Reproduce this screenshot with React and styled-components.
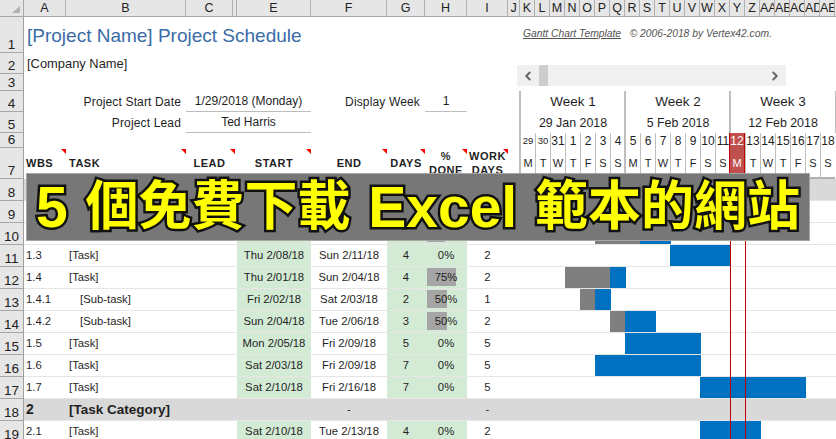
import React from 'react'
import styled, { createGlobalStyle } from 'styled-components'
import { ChevronLeft, ChevronRight } from 'lucide-react'

const letters = ['A', 'B', 'C', '', 'E', 'F', 'G', 'H', 'I', 'J', 'K', 'L', 'M', 'N', 'O', 'P', 'Q', 'R', 'S', 'T', 'U', 'V', 'W', 'X', 'Y', 'Z', 'AA', 'AB', 'AC', 'AD', 'AE']
const dayNums = [29, 30, 31, 1, 2, 3, 4, 5, 6, 7, 8, 9, 10, 11, 12, 13, 14, 15, 16, 17, 18]
const dayNames = ['M', 'T', 'W', 'T', 'F', 'S', 'S']
const weeks = [['Week 1', '29 Jan 2018'], ['Week 2', '5 Feb 2018'], ['Week 3', '12 Feb 2018']]
const TODAY = 14

const tasks = [
  { cat: true, wbs: '1', task: '[Task Category]' },
  { wbs: '1.1', task: '[Task]', start: 'Mon 1/29/18', end: 'Sat 2/03/18', days: 6, pct: 100, work: 5, gray: [0, 6] },
  { wbs: '1.2', task: '[Task]', start: 'Sat 2/03/18', end: 'Wed 2/07/18', days: 5, pct: 45, work: 3, gray: [5, 3], blue: [8, 2] },
  { wbs: '1.3', task: '[Task]', start: 'Thu 2/08/18', end: 'Sun 2/11/18', days: 4, pct: 0, work: 2, blue: [10, 4] },
  { wbs: '1.4', task: '[Task]', start: 'Thu 2/01/18', end: 'Sun 2/04/18', days: 4, pct: 75, work: 2, gray: [3, 3], blue: [6, 1] },
  { wbs: '1.4.1', task: '[Sub-task]', sub: true, start: 'Fri 2/02/18', end: 'Sat 2/03/18', days: 2, pct: 50, work: 1, gray: [4, 1], blue: [5, 1] },
  { wbs: '1.4.2', task: '[Sub-task]', sub: true, start: 'Sun 2/04/18', end: 'Tue 2/06/18', days: 3, pct: 50, work: 2, gray: [6, 1], blue: [7, 2] },
  { wbs: '1.5', task: '[Task]', start: 'Mon 2/05/18', end: 'Fri 2/09/18', days: 5, pct: 0, work: 5, blue: [7, 5] },
  { wbs: '1.6', task: '[Task]', start: 'Sat 2/03/18', end: 'Fri 2/09/18', days: 7, pct: 0, work: 5, blue: [5, 7] },
  { wbs: '1.7', task: '[Task]', start: 'Sat 2/10/18', end: 'Fri 2/16/18', days: 7, pct: 0, work: 5, blue: [12, 7] },
  { cat: true, wbs: '2', task: '[Task Category]' },
  { wbs: '2.1', task: '[Task]', start: 'Sat 2/10/18', end: 'Tue 2/13/18', days: 4, pct: 0, work: 2, blue: [12, 4] },
]

function App() {
  return (
    <Page>
      <GlobalStyle />
      <HeaderRow>
        <Corner />
        <ColumnLetters>
          {letters.map((l, i) => <Letter key={i}>{l}</Letter>)}
        </ColumnLetters>
      </HeaderRow>

      <Row>
        <RowNum $h={36}>1</RowNum>
        <Cells>
          <Title>[Project Name] Project Schedule</Title>
          <Credit><u>Gantt Chart Template</u>&nbsp;&nbsp; © 2006-2018 by Vertex42.com.</Credit>
        </Cells>
      </Row>
      <Row>
        <RowNum $h={21}>2</RowNum>
        <Cells><Company>[Company Name]</Company></Cells>
      </Row>
      <Row>
        <RowNum $h={17}>3</RowNum>
        <Cells />
      </Row>
      <Row>
        <RowNum $h={21}>4</RowNum>
        <Cells>
          <Label $col={1} $span={2}>Project Start Date</Label>
          <Value $col={3} $span={3}>1/29/2018 (Monday)</Value>
          <Label $col={6} $span={2}>Display Week</Label>
          <Value $col={8} $span={1}>1</Value>
          {weeks.map((w, i) => <WeekCell key={i} $i={i}>{w[0]}</WeekCell>)}
          <WeekEdge />
        </Cells>
      </Row>
      <Row>
        <RowNum $h={21}>5</RowNum>
        <Cells>
          <Label $col={1} $span={2}>Project Lead</Label>
          <Value $col={3} $span={3}>Ted Harris</Value>
          {weeks.map((w, i) => <DateCell key={i} $i={i}>{w[1]}</DateCell>)}
          <WeekEdge />
        </Cells>
      </Row>
      <Row>
        <RowNum $h={15}>6</RowNum>
        <Cells>
          {dayNums.map((d, i) => (
            <DayNum key={i} $i={i} $small={i < 2} $today={i === TODAY}>{d}</DayNum>
          ))}
        </Cells>
      </Row>
      <Row>
        <RowNum $h={31}>7</RowNum>
        <Cells>
          <Heading $col={1} $align="flex-start" $pad={2}>WBS</Heading>
          <Heading $col={2} $align="flex-start" $pad={3}>TASK</Heading>
          <Heading $col={3} $nudge={-2}>LEAD</Heading>
          <Heading $col={5}>START</Heading>
          <Heading $col={6}>END</Heading>
          <Heading $col={7}>DAYS</Heading>
          <Heading $col={8}>%<br />DONE</Heading>
          <Heading $col={9}>WORK<br />DAYS</Heading>
          {dayNums.map((d, i) => (
            <DayName key={i} $i={i} $today={i === TODAY}>{dayNames[i % 7]}</DayName>
          ))}
        </Cells>
      </Row>

      {tasks.map((t, n) => (
        <Row key={n}>
          <RowNum $h={22}>{n + 8}</RowNum>
          <TaskCells $cat={t.cat}>
            <Wbs $cat={t.cat}>{t.wbs}</Wbs>
            <TaskName $cat={t.cat} $sub={t.sub}>{t.task}</TaskName>
            {t.cat ? (
              <>
                <Plain $col={6}>-</Plain>
                <Plain $col={9}>-</Plain>
              </>
            ) : (
              <>
                <Tinted $col={5}>{t.start}</Tinted>
                <Plain $col={6}>{t.end}</Plain>
                <Tinted $col={7}>{t.days}</Tinted>
                <Percent $pct={t.pct}>{t.pct}%</Percent>
                <Plain $col={9}>{t.work}</Plain>
              </>
            )}
            {t.gray && <Bar $from={t.gray[0]} $len={t.gray[1]} $color="#7f7f7f" />}
            {t.blue && <Bar $from={t.blue[0]} $len={t.blue[1]} $color="#0070c0" />}
            <TodayLine />
          </TaskCells>
        </Row>
      ))}

      <Scroller>
        <ScrollBtn><ChevronLeft size={14} strokeWidth={3.4} color="#666" /></ScrollBtn>
        <ScrollThumb />
        <ScrollBtn><ChevronRight size={14} strokeWidth={3.4} color="#666" /></ScrollBtn>
      </Scroller>

      <Banner>
        <Latin>5</Latin> 個免費下載 <Latin>Excel</Latin> 範本的網站
      </Banner>
    </Page>
  )
}

export default App

const GlobalStyle = createGlobalStyle`
  html, body {
    margin: 0;
    background: #fff;
  }
`

const Page = styled.div`
  position: relative;
  width: 836px;
  height: 439px;
  overflow: hidden;
  background: #fff;
  color: #1f1f1f;
  font-family: "Liberation Sans", Arial, sans-serif;
  font-size: 12px;
`

const HeaderRow = styled.div`
  display: flex;
  height: 17px;
`

const Corner = styled.div`
  position: relative;
  box-sizing: border-box;
  width: 24px;
  flex: none;
  background: #e6e6e6;
  border-right: 1px solid #a8a8a8;
  border-bottom: 1px solid #a8a8a8;
  &::after {
    content: '';
    position: absolute;
    left: 12px;
    top: 6px;
    width: 8px;
    height: 7px;
    background: #b4b4b4;
    clip-path: polygon(100% 0, 100% 100%, 0 100%);
  }
`

const grid = `
  display: grid;
  flex: 1;
  grid-template-columns: 42px 120px 47px 4px 74px 76px 38px 42px 41px 12px repeat(21, 15px) 1px;
  grid-template-rows: 1fr;
  min-width: 0;
`

const ColumnLetters = styled.div`
  ${grid}
  background: #e6e6e6;
  box-sizing: border-box;
  border-bottom: 1px solid #a8a8a8;
`

const Letter = styled.div`
  border-right: 1px solid #b0b0b0;
  font-size: 12.5px;
  line-height: 16px;
  text-align: center;
  white-space: nowrap;
  overflow: hidden;
  color: #222;
`

const Row = styled.div`
  display: flex;
`

const RowNum = styled.div`
  box-sizing: border-box;
  width: 24px;
  height: ${p => p.$h}px;
  flex: none;
  display: flex;
  align-items: flex-end;
  justify-content: center;
  background: #e6e6e6;
  border-right: 1px solid #a0a0a0;
  border-bottom: 1px solid #a8a8a8;
  font-size: 13.5px;
  line-height: 15px;
  color: #222;
`

const Cells = styled.div`
  ${grid}
`

const TaskCells = styled.div`
  ${grid}
  box-sizing: border-box;
  border-bottom: 1px solid #e6e6e6;
  background: ${p => (p.$cat ? '#d9d9d9' : '#fff')};
`

const Cell = styled.div`
  grid-row: 1;
  grid-column: ${p => p.$col} / span ${p => p.$span || 1};
  display: flex;
  align-items: center;
  justify-content: center;
  white-space: nowrap;
  min-width: 0;
`

const Title = styled(Cell).attrs({ $col: 1, $span: 9 })`
  justify-content: flex-start;
  padding: 2px 0 0 3px;
  color: #3a6ca6;
  font-size: 19px;
`

const Credit = styled(Cell).attrs({ $col: 11, $span: 21 })`
  justify-content: flex-start;
  padding: 0 0 3px 3px;
  color: #555;
  font-size: 10.3px;
  font-style: italic;
`

const Company = styled(Cell).attrs({ $col: 1, $span: 9 })`
  justify-content: flex-start;
  padding-left: 3px;
  font-size: 12.9px;
`

const Label = styled(Cell)`
  justify-content: flex-end;
  padding-right: 5px;
  letter-spacing: 0.15px;
`

const Value = styled(Cell)`
  border-bottom: 1px solid #bdbdbd;
`

const WeekCell = styled(Cell).attrs(p => ({ $col: 11 + p.$i * 7, $span: 7 }))`
  border-left: 2px solid #bfbfbf;
  margin-left: -1px;
  font-size: 13.5px;
`

const DateCell = styled(WeekCell)`
  font-size: 12.4px;
`

const WeekEdge = styled(Cell).attrs({ $col: 32 })`
  background: #bfbfbf;
`

const DayNum = styled(Cell).attrs(p => ({ $col: 11 + p.$i }))`
  border-left: ${p => (p.$i % 7 === 0 ? '2px' : '1px')} solid #bfbfbf;
  margin-left: ${p => (p.$i % 7 === 0 ? '-1px' : '0')};
  font-size: ${p => (p.$small ? '9.5px' : '12px')};
  ${p => p.$today && `
    background: #c0504d;
    color: #fff;
    border-left: 1px solid #c00000;
    border-right: 1px solid #c00000;
  `}
`

const DayName = styled(DayNum)`
  font-size: 11px;
  align-items: flex-start;
  padding-top: 9px;
  box-sizing: border-box;
  border-bottom: 2px solid #b0b0b0;
`

const Heading = styled(Cell)`
  position: relative;
  justify-content: ${p => p.$align || 'center'};
  text-align: center;
  padding-left: ${p => p.$pad || 0}px;
  padding-bottom: 2px;
  font-size: 11px;
  font-weight: bold;
  letter-spacing: 0.5px;
  line-height: 14px;
  &::after {
    content: '';
    position: absolute;
    top: 1px;
    right: ${p => p.$nudge || 0}px;
    width: 5px;
    height: 5px;
    background: #f00;
    clip-path: polygon(0 0, 100% 0, 100% 100%);
  }
`

const Wbs = styled(Cell).attrs({ $col: 1 })`
  justify-content: flex-start;
  padding: 0 0 1px 2px;
  font-size: ${p => (p.$cat ? '14px' : '11.3px')};
  font-weight: ${p => (p.$cat ? 'bold' : 'normal')};
`

const TaskName = styled(Cell).attrs({ $col: 2, $span: 2 })`
  justify-content: flex-start;
  padding: 0 0 1px ${p => (p.$sub ? 14 : 3)}px;
  font-size: ${p => (p.$cat ? '13.5px' : '11.3px')};
  font-weight: ${p => (p.$cat ? 'bold' : 'normal')};
`

const Plain = styled(Cell)`
  padding-bottom: 1px;
  font-size: 11.3px;
`

const Tinted = styled(Plain)`
  background: #d3ebd5;
`

const Percent = styled(Tinted).attrs({ $col: 8 })`
  background-image: linear-gradient(#a5a5a5, #a5a5a5);
  background-repeat: no-repeat;
  background-position: 2px 1px;
  background-size: ${p => Math.round(p.$pct * 0.39)}px 18px;
`

const Bar = styled.div`
  grid-row: 1;
  grid-column: ${p => 11 + p.$from} / span ${p => p.$len};
  margin-right: -1px;
  background: ${p => p.$color};
`

const TodayLine = styled.div`
  grid-row: 1;
  grid-column: ${11 + TODAY};
  margin-bottom: -1px;
  margin-right: -1px;
  border-left: 1px solid #c00000;
  border-right: 1px solid #c00000;
  z-index: 1;
`

const Scroller = styled.div`
  position: absolute;
  left: 517px;
  top: 65px;
  width: 269px;
  height: 21px;
  display: flex;
  align-items: stretch;
  background: #f0f0f0;
`

const ScrollBtn = styled.div`
  width: 22px;
  display: flex;
  align-items: center;
  justify-content: center;
  &:last-child {
    margin-left: auto;
  }
`

const ScrollThumb = styled.div`
  width: 9px;
  background: #cdcdcd;
`

const Banner = styled.div`
  position: absolute;
  left: 26px;
  top: 173px;
  width: 784px;
  height: 68px;
  box-sizing: border-box;
  display: flex;
  align-items: center;
  justify-content: center;
  white-space: pre;
  word-spacing: 3px;
  background: #777;
  border: 1px solid #a6a6a6;
  color: #ff0;
  font-family: "Liberation Sans", "Noto Sans CJK TC", sans-serif;
  font-size: 53px;
  font-weight: bold;
  line-height: 66px;
  -webkit-text-stroke: 5px #111;
  paint-order: stroke fill;
  z-index: 2;
`

const Latin = styled.span`
  font-size: 57px;
`
